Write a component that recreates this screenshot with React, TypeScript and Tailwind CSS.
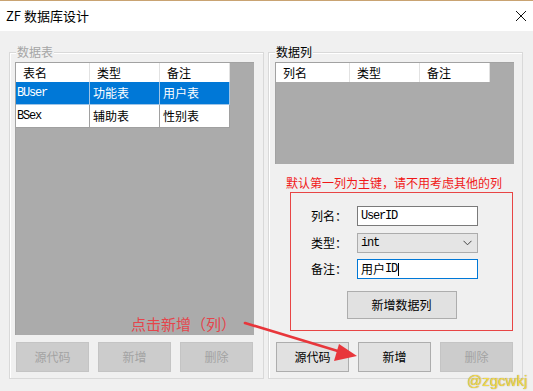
import React from "react";

const CJK = '"Noto Sans CJK SC", "Noto Sans", sans-serif';
const MONO = '"Liberation Mono", "Noto Sans CJK SC", monospace';
const monoStyle = { fontFamily: MONO, fontSize: "12px", letterSpacing: "-1.2px" };

function Btn({ children, disabled, w = "w-[73px]", h = "h-[30px]" }: { children: React.ReactNode; disabled?: boolean; w?: string; h?: string }) {
  return (
    <div
      className={`${w} ${h} flex items-center justify-center text-[12px] border ${
        disabled ? "bg-[#cccccc] border-[#c4c4c4] text-[#a3a3a3]" : "bg-[#e1e1e1] border-[#adadad] text-black"
      }`}
    >
      {children}
    </div>
  );
}

function HeaderRow({ cols }: { cols: string[] }) {
  const widths = ["w-[74px]", "w-[70px]", "w-[70px]"];
  return (
    <div className="flex h-[19px]">
      {cols.map((c, i) => (
        <div key={i} className={`${widths[i]} h-full bg-white border-r border-[#e2e2e2] pl-[7px] flex items-center text-[12px] text-black`}>
          {c}
        </div>
      ))}
    </div>
  );
}

function DataRow({ cells, selected }: { cells: string[]; selected?: boolean }) {
  const widths = ["w-[74px]", "w-[70px]", "w-[70px]"];
  return (
    <div className="flex h-[23px]">
      {cells.map((c, i) => (
        <div
          key={i}
          className={`${widths[i]} h-full border-r border-b flex items-center text-[12px] ${
            selected ? "bg-[#0078d7] text-white border-[#9fc4e6]" : "bg-white text-black border-[#a0a0a0]"
          } ${i === 0 ? "pl-[1px]" : "pl-[3px]"}`}
          style={i === 0 ? monoStyle : undefined}
        >
          {c}
        </div>
      ))}
    </div>
  );
}

function Group({ label, disabled, children, className }: { label: string; disabled?: boolean; children: React.ReactNode; className?: string }) {
  return (
    <div className={`relative w-[255px] h-[327px] border border-[#d9d9d9] shadow-[inset_1px_1px_0_#ffffff] flex flex-col pt-[9px] ${className ?? ""}`}>
      <span className={`absolute left-[6px] top-[-10px] px-[1px] bg-[#f0f0f0] text-[12px] leading-[18px] ${disabled ? "text-[#a5a5a5]" : "text-black"}`}>
        {label}
      </span>
      {children}
    </div>
  );
}

export default function App() {
  return (
    <div
      className="relative w-[533px] h-[391px] overflow-hidden bg-[#f0f0f0] border-t border-[#c9a372]"
      style={{ fontFamily: CJK }}
    >
      {/* Title bar */}
      <div className="h-[30px] bg-white flex items-center justify-between pl-[6px] pr-[6px]">
        <span className="text-[13px] text-black">ZF 数据库设计</span>
        <svg width="12" height="12" viewBox="0 0 12 12">
          <path d="M1 1 L11 11 M11 1 L1 11" stroke="#111" strokeWidth="1" fill="none" />
        </svg>
      </div>

      {/* Body */}
      <div className="flex pt-[21px] pl-[9px] gap-[4px]">
        {/* Left group */}
        <Group label="数据表" disabled>
          <div className="ml-[5px] w-[239px] h-[273px] bg-[#ababab] border-t border-l border-[#a2a2a2] flex flex-col">
            <HeaderRow cols={["表名", "类型", "备注"]} />
            <DataRow cells={["BUser", "功能表", "用户表"]} selected />
            <DataRow cells={["BSex", "辅助表", "性别表"]} />
          </div>
          <div className="flex gap-[9px] ml-[6px] mt-[7px]">
            <Btn disabled>源代码</Btn>
            <Btn disabled>新增</Btn>
            <Btn disabled>删除</Btn>
          </div>
        </Group>

        {/* Right group */}
        <Group label="数据列">
          <div className="ml-[6px] w-[239px] h-[102px] bg-[#ababab] border-t border-l border-[#a2a2a2] flex flex-col">
            <HeaderRow cols={["列名", "类型", "备注"]} />
          </div>
          <div className="h-[28px] pl-[17px] pt-[11px] text-[12px] leading-[16px] text-[#f01818]">
            默认第一列为主键，请不用考虑其他的列
          </div>
          <div className="ml-[21px] w-[223px] h-[139px] border border-[#e84545] flex flex-col pt-[13px] pl-[20px]">
            <div className="flex items-center h-[20px]">
              <span className="w-[46px] text-[12px] text-black">列名：</span>
              <div className="w-[121px] h-[20px] bg-white border border-[#7a7a7a] flex items-center pl-[3px] text-black" style={monoStyle}>
                UserID
              </div>
            </div>
            <div className="flex items-center h-[20px] mt-[7px]">
              <span className="w-[46px] text-[12px] text-black">类型：</span>
              <div className="w-[121px] h-[20px] bg-[#e5e5e5] border border-[#acacac] flex items-center justify-between pl-[3px] pr-[5px] text-black">
                <span style={monoStyle}>int</span>
                <svg width="9" height="6" viewBox="0 0 9 6">
                  <path d="M0.5 0.8 L4.5 4.8 L8.5 0.8" stroke="#444" strokeWidth="1" fill="none" />
                </svg>
              </div>
            </div>
            <div className="flex items-center h-[20px] mt-[6px]">
              <span className="w-[46px] text-[12px] text-black">备注：</span>
              <div className="w-[121px] h-[20px] bg-white border border-[#0078d7] flex items-center pl-[3px] text-black">
                <span className="text-[12px]">用户</span>
                <span style={monoStyle}>ID</span>
                <span className="w-[1px] h-[13px] bg-black ml-[1px]" />
              </div>
            </div>
            <div className="flex justify-center mt-[12px] pr-[20px]">
              <Btn w="w-[110px]" h="h-[28px]">新增数据列</Btn>
            </div>
          </div>
          <div className="flex gap-[9px] ml-[7px] mt-[11px]">
            <Btn>源代码</Btn>
            <Btn>新增</Btn>
            <Btn disabled>删除</Btn>
          </div>
        </Group>
      </div>

      {/* Annotation */}
      <span className="absolute left-[131px] top-[313px] text-[15px] leading-[20px] text-[#e4454b]">点击新增（列）</span>
      <svg className="absolute left-0 top-0 pointer-events-none" width="533" height="391" viewBox="0 0 533 391">
        <path d="M245 322 L341 351" stroke="#e8363b" strokeWidth="2.6" fill="none" strokeLinecap="round" />
        <polygon points="339,343 357,355 334,360" fill="#e8363b" />
      </svg>

      {/* Watermark */}
      <span
        className="absolute left-[467px] top-[371px] text-[15px] leading-[18px] text-[#f3d94a]"
        style={{ fontFamily: '"Liberation Sans", sans-serif', textShadow: "0 0 1px #8a7a30" }}
      >
        @zgcwkj
      </span>
    </div>
  );
}
